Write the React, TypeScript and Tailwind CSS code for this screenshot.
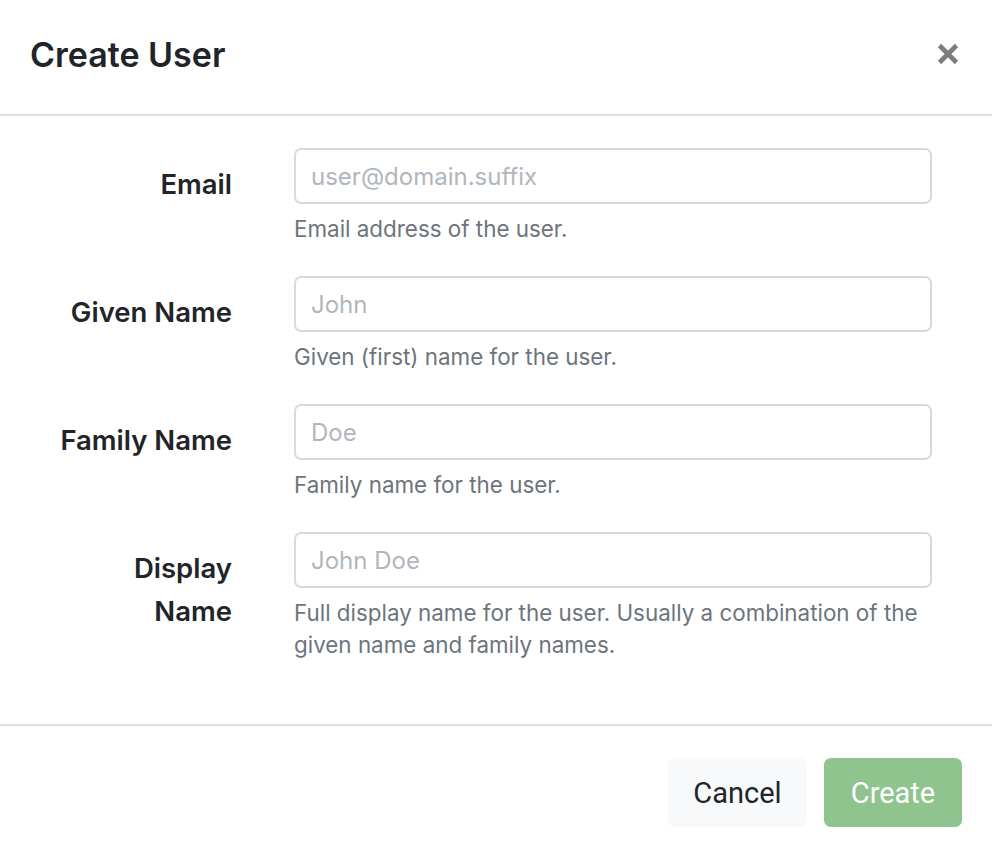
import React from "react";

const rows = [
  { label: "Email", placeholder: "user@domain.suffix", help: "Email address of the user." },
  { label: "Given Name", placeholder: "John", help: "Given (first) name for the user." },
  { label: "Family Name", placeholder: "Doe", help: "Family name for the user." },
  {
    label: "Display Name",
    placeholder: "John Doe",
    help: "Full display name for the user. Usually a combination of the given name and family names.",
  },
];

export default function App() {
  return (
    <div
      className="w-[992px] h-[854px] bg-white text-[#212529] overflow-hidden"
      style={{ fontFamily: "Inter, 'Noto Sans', sans-serif" }}
    >
      {/* Header */}
      <div className="h-[116px] flex items-center justify-between pl-[30px] pr-[33px] border-b-2 border-[#dee2e6]">
        <h1 className="text-[34px] font-semibold leading-none text-[#212529] pb-[4px]">Create User</h1>
        <button className="w-[22px] h-[22px] flex items-center justify-center mb-[6px]" aria-label="Close">
          <svg width="22" height="22" viewBox="0 0 22 22">
            <path d="M2.5 2.5 L19.5 19.5 M19.5 2.5 L2.5 19.5" stroke="#7d7d7d" strokeWidth="4.6" strokeLinecap="butt" />
          </svg>
        </button>
      </div>

      {/* Body */}
      <div className="pt-[32px] pb-[32px]">
        {rows.map((r) => (
          <div key={r.label} className="flex mb-[31px]">
            <div className="w-[232px] flex justify-end pt-[15px]">
              <span className="max-w-[176px] text-right text-[27.5px] font-semibold leading-[43px]">{r.label}</span>
            </div>
            <div className="ml-[62px] w-[638px]">
              <input
                className="w-full h-[56px] border-2 border-[#d6dbe0] rounded-[7px] px-[15px] pt-[1px] text-[24px] outline-none placeholder:text-[#b0b6bd]"
                placeholder={r.placeholder}
              />
              <div className="mt-[9px] text-[22.4px] leading-[32px] text-[#6c757d]">{r.help}</div>
            </div>
          </div>
        ))}
      </div>

      {/* Footer */}
      <div className="border-t-2 border-[#dee2e6] pt-[32px] pr-[30px] flex justify-end gap-[17px]">
        <button
          className="w-[139px] h-[69px] rounded-[7px] bg-[#f8f9fa] pt-[3px] text-[29px] text-[#212529]"
          style={{ fontFamily: "Roboto, sans-serif" }}
        >
          Cancel
        </button>
        <button
          className="w-[138px] h-[69px] rounded-[7px] bg-[#8fc48f] pt-[3px] text-[29px] text-white"
          style={{ fontFamily: "Roboto, sans-serif" }}
        >
          Create
        </button>
      </div>
    </div>
  );
}
